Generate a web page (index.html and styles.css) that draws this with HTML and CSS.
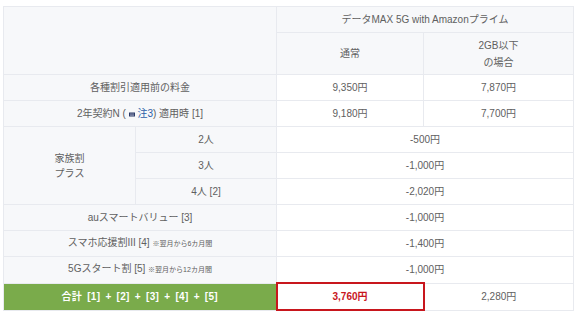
FILE: index.html
```html
<!DOCTYPE html>
<html lang="ja">
<head>
<meta charset="utf-8">
<link rel="stylesheet" href="styles.css">
</head>
<body>
<table class="plan">
  <colgroup>
    <col class="c1"><col class="c2"><col class="c3"><col class="c4">
  </colgroup>
  <tr class="h1">
    <th class="lbl" colspan="2" rowspan="2"></th>
    <th class="lbl" colspan="2">データMAX 5G with Amazonプライム</th>
  </tr>
  <tr class="h2">
    <th class="lbl">通常</th>
    <th class="lbl two">2GB以下<br>の場合</th>
  </tr>
  <tr>
    <th class="lbl" colspan="2">各種割引適用前の料金</th>
    <td>9,350円</td><td>7,870円</td>
  </tr>
  <tr>
    <th class="lbl" colspan="2">2年契約N ( <svg class="ico" width="6" height="5" viewBox="0 0 6 5"><rect x="0" y="0.5" width="6" height="4" fill="#2b3a67"/><path d="M1 2h4M1 3.3h4" stroke="#c9cfe0" stroke-width="0.6"/></svg> <span class="link">注3</span>) 適用時 [1]</th>
    <td>9,180円</td><td>7,700円</td>
  </tr>
  <tr>
    <th class="lbl fam" rowspan="3">家族割<br>プラス</th>
    <th class="lbl">2人</th>
    <td colspan="2">-500円</td>
  </tr>
  <tr>
    <th class="lbl">3人</th>
    <td colspan="2">-1,000円</td>
  </tr>
  <tr>
    <th class="lbl">4人 [2]</th>
    <td colspan="2">-2,020円</td>
  </tr>
  <tr>
    <th class="lbl" colspan="2">auスマートバリュー [3]</th>
    <td colspan="2">-1,000円</td>
  </tr>
  <tr>
    <th class="lbl" colspan="2">スマホ応援割III [4] <span class="note">※翌月から6カ月間</span></th>
    <td colspan="2">-1,400円</td>
  </tr>
  <tr>
    <th class="lbl" colspan="2">5Gスタート割 [5] <span class="note">※翌月から12カ月間</span></th>
    <td colspan="2">-1,000円</td>
  </tr>
  <tr class="total">
    <th class="sum" colspan="2">合計 [1] + [2] + [3] + [4] + [5]</th>
    <td class="hl">3,760円</td>
    <td>2,280円</td>
  </tr>
</table>
</body>
</html>
```

FILE: styles.css
```css
html, body {
  margin: 0;
  padding: 0;
  background: #ffffff;
}
body {
  padding: 6px 0 0 3px;
  font-family: "Liberation Sans", "Noto Sans CJK JP", sans-serif;
  color: #606060;
  font-size: 10px;
}
.plan {
  border-collapse: collapse;
  table-layout: fixed;
  width: 570px;
}
.c1 { width: 132px; }
.c2 { width: 141px; }
.c3 { width: 147px; }
.c4 { width: 150px; }
.plan th, .plan td {
  border: 1px solid #e8eaef;
  text-align: center;
  vertical-align: middle;
  font-weight: normal;
  padding: 0;
  height: 25px;
  line-height: 14px;
}
.plan .lbl {
  background: #f7f8fa;
}
.h2 th {
  height: 41px;
}
.two {
  line-height: 17px !important;
}
.fam {
  line-height: 15px !important;
}
.ico {
  vertical-align: 0px;
}
.link {
  color: #2c5ea8;
}
.note {
  font-size: 7px;
}
.sum {
  background: #7aab4b;
  color: #ffffff;
  font-weight: bold !important;
  font-size: 10px;
  word-spacing: 2px;
  letter-spacing: 0.3px;
}
.plan td.hl {
  border: 2px solid #c8161d;
  color: #c8161d;
  font-weight: bold;
}
```
